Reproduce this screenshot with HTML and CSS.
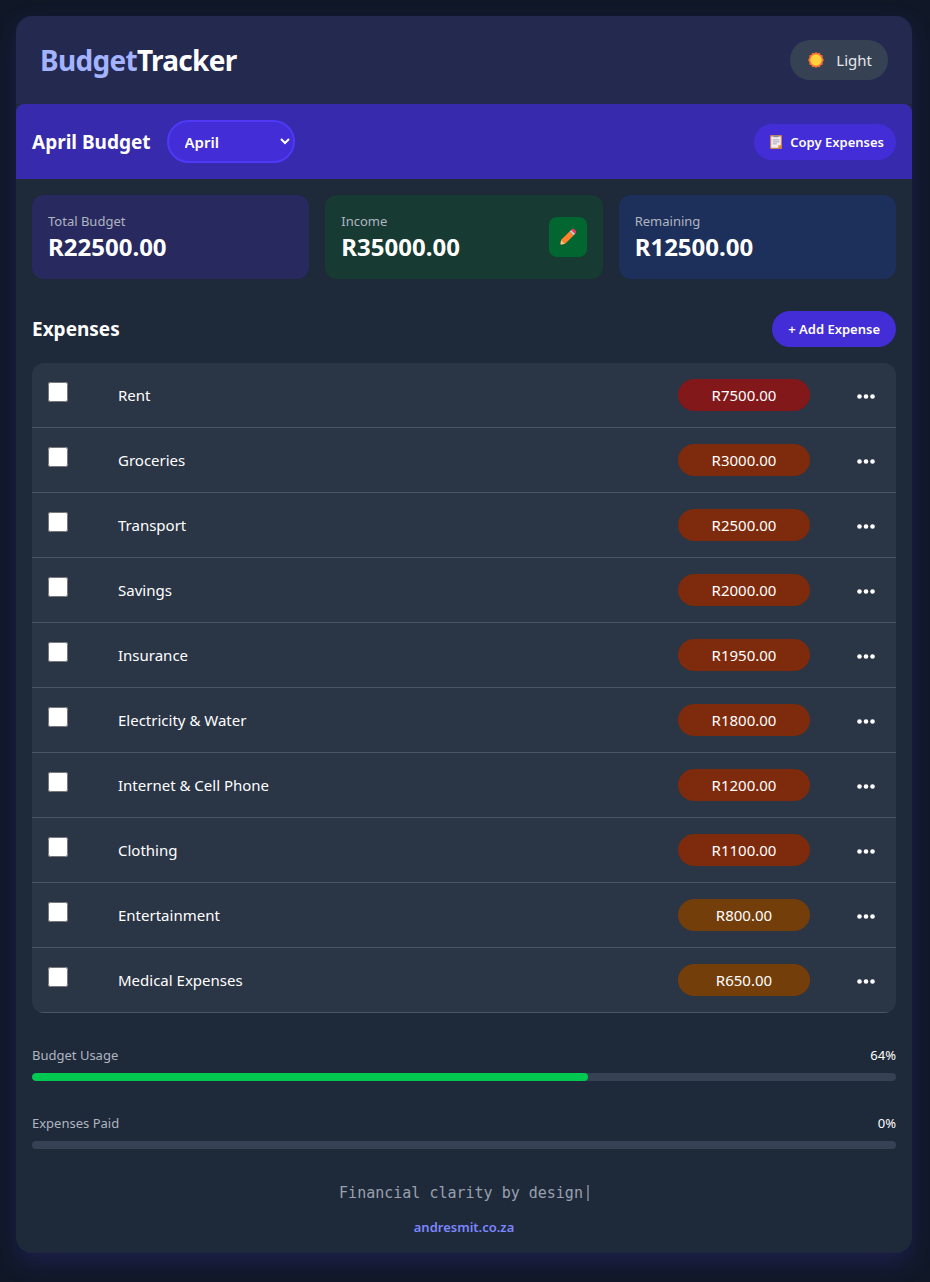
FILE: index.html
```html
<!DOCTYPE html>
<html lang="en">
<head>
<meta charset="utf-8">
<meta name="viewport" content="width=device-width, initial-scale=1">
<title>BudgetTracker</title>
<link rel="stylesheet" href="styles.css">
</head>
<body>
<div class="app">
  <header class="app-header">
    <h1 class="brand"><span class="brand-accent">Budget</span>Tracker</h1>
    <button type="button" class="theme-toggle">
      <svg class="icon-sun" viewBox="0 0 16 16" aria-hidden="true">
        <path fill="#f8702f" d="M8 0l1.6 1.3 2.1-.6.9 2 2.1.8-.1 2.2L16 8l-1.4 2.2.1 2.2-2.1.8-.9 2-2.1-.5L8 16l-1.6-1.3-2.1.5-.9-2-2.1-.8.1-2.2L0 8l1.4-2.3-.1-2.2 2.1-.8.9-2 2.1.6z"/>
        <circle cx="8" cy="8" r="5.7" fill="#ffd23e"/>
      </svg>
      <span>Light</span>
    </button>
  </header>

  <section class="month-bar">
    <div class="month-picker">
      <h2 class="section-title">April Budget</h2>
      <select class="month-select" aria-label="Month">
        <option>January</option><option>February</option><option>March</option>
        <option selected>April</option><option>May</option><option>June</option>
        <option>July</option><option>August</option><option>September</option>
        <option>October</option><option>November</option><option>December</option>
      </select>
    </div>
    <button type="button" class="btn btn-copy">
      <svg class="icon-clipboard" viewBox="0 0 12 14" aria-hidden="true">
        <rect width="12" height="14" y="0" rx="1" fill="#c9834a"/>
        <path fill="#f1eef5" d="M1.2 1.6h9.6v8.2L8 12.8H1.2z"/>
        <path fill="#f5b45c" d="M8 12.8V9.9h2.8z"/>
        <path fill="#8f8a99" d="M3.5.3h5v2h-5z"/>
        <path stroke="#aaa5b8" stroke-width="1" d="M2.7 4.8h6.6M2.7 6.8h6.6M2.7 8.8h4.2"/>
      </svg>
      <span>Copy Expenses</span>
    </button>
  </section>

  <main class="content">
    <section class="stats">
      <div class="stat stat-total">
        <div><p class="stat-label">Total Budget</p><p class="stat-value">R22500.00</p></div>
      </div>
      <div class="stat stat-income">
        <div><p class="stat-label">Income</p><p class="stat-value">R35000.00</p></div>
        <button type="button" class="edit-income" aria-label="Edit income">
          <svg class="icon-pencil" viewBox="0 0 18 18" aria-hidden="true">
            <path fill="#ffc27d" d="M1 17l1.2-5.2 4 4z"/>
            <path fill="#5b4a55" d="M1 17l.4-1.6 1.2 1.2z"/>
            <path fill="#ff822d" d="M2.2 11.8l8.6-8.5 4 3.9-8.6 8.6z"/>
            <path fill="#d3d3da" d="M10.8 3.3l1.4-1.4 4 3.9-1.4 1.4z"/>
            <path fill="#f8315f" d="M12.2 1.9l.8-.8q1-.9 2 0l2 2q.8.9 0 1.8l-.8.9z"/>
          </svg>
        </button>
      </div>
      <div class="stat stat-remaining">
        <div><p class="stat-label">Remaining</p><p class="stat-value">R12500.00</p></div>
      </div>
    </section>

    <section class="expenses">
      <div class="expenses-head">
        <h2 class="section-title">Expenses</h2>
        <button type="button" class="btn">+ Add Expense</button>
      </div>
      <table class="expense-table">
        <colgroup><col class="col-check"><col><col class="col-amount"><col class="col-menu"></colgroup>
        <tbody>
          <tr><td><input type="checkbox" id="e1" class="paid"></td><td><label for="e1">Rent</label></td><td><span class="amount amount-high">R7500.00</span></td><td><button type="button" class="menu" aria-label="Rent options"><svg viewBox="0 0 18 5"><circle cx="2.5" cy="2.5" r="2.3"/><circle cx="9" cy="2.5" r="2.3"/><circle cx="15.5" cy="2.5" r="2.3"/></svg></button></td></tr>
          <tr><td><input type="checkbox" id="e2" class="paid"></td><td><label for="e2">Groceries</label></td><td><span class="amount amount-mid">R3000.00</span></td><td><button type="button" class="menu" aria-label="Groceries options"><svg viewBox="0 0 18 5"><circle cx="2.5" cy="2.5" r="2.3"/><circle cx="9" cy="2.5" r="2.3"/><circle cx="15.5" cy="2.5" r="2.3"/></svg></button></td></tr>
          <tr><td><input type="checkbox" id="e3" class="paid"></td><td><label for="e3">Transport</label></td><td><span class="amount amount-mid">R2500.00</span></td><td><button type="button" class="menu" aria-label="Transport options"><svg viewBox="0 0 18 5"><circle cx="2.5" cy="2.5" r="2.3"/><circle cx="9" cy="2.5" r="2.3"/><circle cx="15.5" cy="2.5" r="2.3"/></svg></button></td></tr>
          <tr><td><input type="checkbox" id="e4" class="paid"></td><td><label for="e4">Savings</label></td><td><span class="amount amount-mid">R2000.00</span></td><td><button type="button" class="menu" aria-label="Savings options"><svg viewBox="0 0 18 5"><circle cx="2.5" cy="2.5" r="2.3"/><circle cx="9" cy="2.5" r="2.3"/><circle cx="15.5" cy="2.5" r="2.3"/></svg></button></td></tr>
          <tr><td><input type="checkbox" id="e5" class="paid"></td><td><label for="e5">Insurance</label></td><td><span class="amount amount-mid">R1950.00</span></td><td><button type="button" class="menu" aria-label="Insurance options"><svg viewBox="0 0 18 5"><circle cx="2.5" cy="2.5" r="2.3"/><circle cx="9" cy="2.5" r="2.3"/><circle cx="15.5" cy="2.5" r="2.3"/></svg></button></td></tr>
          <tr><td><input type="checkbox" id="e6" class="paid"></td><td><label for="e6">Electricity &amp; Water</label></td><td><span class="amount amount-mid">R1800.00</span></td><td><button type="button" class="menu" aria-label="Electricity &amp; Water options"><svg viewBox="0 0 18 5"><circle cx="2.5" cy="2.5" r="2.3"/><circle cx="9" cy="2.5" r="2.3"/><circle cx="15.5" cy="2.5" r="2.3"/></svg></button></td></tr>
          <tr><td><input type="checkbox" id="e7" class="paid"></td><td><label for="e7">Internet &amp; Cell Phone</label></td><td><span class="amount amount-mid">R1200.00</span></td><td><button type="button" class="menu" aria-label="Internet &amp; Cell Phone options"><svg viewBox="0 0 18 5"><circle cx="2.5" cy="2.5" r="2.3"/><circle cx="9" cy="2.5" r="2.3"/><circle cx="15.5" cy="2.5" r="2.3"/></svg></button></td></tr>
          <tr><td><input type="checkbox" id="e8" class="paid"></td><td><label for="e8">Clothing</label></td><td><span class="amount amount-mid">R1100.00</span></td><td><button type="button" class="menu" aria-label="Clothing options"><svg viewBox="0 0 18 5"><circle cx="2.5" cy="2.5" r="2.3"/><circle cx="9" cy="2.5" r="2.3"/><circle cx="15.5" cy="2.5" r="2.3"/></svg></button></td></tr>
          <tr><td><input type="checkbox" id="e9" class="paid"></td><td><label for="e9">Entertainment</label></td><td><span class="amount amount-low">R800.00</span></td><td><button type="button" class="menu" aria-label="Entertainment options"><svg viewBox="0 0 18 5"><circle cx="2.5" cy="2.5" r="2.3"/><circle cx="9" cy="2.5" r="2.3"/><circle cx="15.5" cy="2.5" r="2.3"/></svg></button></td></tr>
          <tr><td><input type="checkbox" id="e10" class="paid"></td><td><label for="e10">Medical Expenses</label></td><td><span class="amount amount-low">R650.00</span></td><td><button type="button" class="menu" aria-label="Medical Expenses options"><svg viewBox="0 0 18 5"><circle cx="2.5" cy="2.5" r="2.3"/><circle cx="9" cy="2.5" r="2.3"/><circle cx="15.5" cy="2.5" r="2.3"/></svg></button></td></tr>
        </tbody>
      </table>
    </section>

    <section class="progress-list">
      <div class="progress">
        <div class="progress-head"><span class="progress-label">Budget Usage</span><span>64%</span></div>
        <div class="track"><div class="fill" style="width: 64.3%"></div></div>
      </div>
      <div class="progress">
        <div class="progress-head"><span class="progress-label">Expenses Paid</span><span>0%</span></div>
        <div class="track"><div class="fill" style="width: 0%"></div></div>
      </div>
    </section>
  </main>

  <footer class="app-footer">
    <p class="tagline">Financial clarity by design</p>
    <a class="site-link" href="#">andresmit.co.za</a>
  </footer>
</div>
</body>
</html>
```
FILE: styles.css
```css
* {
  box-sizing: border-box;
  margin: 0;
}

body {
  padding: 16px 18px 16px 16px;
  background: #101828;
  color: #fff;
  font: 15px/24px "Noto Sans", sans-serif;
}

button,
select {
  border: 0;
  color: inherit;
  font: inherit;
  cursor: pointer;
}

.app {
  max-width: 1024px;
  margin: 0 auto 13px;
  overflow: hidden;
  border-radius: 16px;
  background: #1e2939;
  box-shadow: 0 10px 25px -3px rgba(49, 44, 133, 0.45);
}

.app-header {
  display: flex;
  align-items: center;
  justify-content: space-between;
  padding: 24px;
  background: rgba(49, 44, 133, 0.3);
}

.brand {
  font-size: 28px;
  line-height: 40px;
  letter-spacing: -0.025em;
}

.brand-accent {
  color: #a3b3ff;
}

.theme-toggle {
  display: flex;
  align-items: center;
  gap: 12px;
  padding: 8px 16px;
  border-radius: 20px;
  background: #364153;
  color: #e5e7eb;
}

.icon-sun {
  width: 16px;
  height: 16px;
  margin-left: 2px;
}

.month-bar {
  display: flex;
  align-items: center;
  justify-content: space-between;
  padding: 16px;
  border-radius: 8px 8px 0 0;
  background: #372aac;
}

.month-picker {
  display: flex;
  align-items: center;
  gap: 16px;
}

.section-title {
  font-size: 19px;
  line-height: 28px;
}

.month-select {
  width: 128px;
  height: 43px;
  padding: 8px 12px;
  border: 2px solid #4f39f6;
  border-radius: 22px;
  background: #432dd7;
  font-weight: 600;
}

.btn {
  padding: 8px 16px;
  border-radius: 18px;
  background: #432dd7;
  font-size: 13px;
  font-weight: 600;
  line-height: 20px;
}

.btn-copy {
  display: flex;
  align-items: center;
  gap: 8px;
  padding-right: 12px;
}

.icon-clipboard {
  width: 12px;
  height: 14px;
}

.content {
  padding: 16px 16px 0;
}

.stats {
  display: grid;
  grid-template-columns: repeat(3, 1fr);
  gap: 16px;
}

.stat {
  display: flex;
  align-items: center;
  justify-content: space-between;
  padding: 16px;
  border-radius: 12px;
}

.stat-total {
  background: rgba(49, 44, 133, 0.5);
}

.stat-income {
  background: rgba(13, 84, 43, 0.4);
}

.stat-remaining {
  background: rgba(28, 57, 142, 0.4);
}

.stat-label {
  color: #b0b5c0;
  font-size: 13px;
  line-height: 20px;
}

.stat-value {
  font-size: 24px;
  font-weight: 700;
  line-height: 32px;
}

.edit-income {
  display: flex;
  align-items: center;
  justify-content: center;
  width: 38px;
  height: 40px;
  padding: 0;
  border-radius: 8px;
  background: #016630;
}

.icon-pencil {
  width: 18px;
  height: 18px;
}

.expenses {
  margin-top: 32px;
}

.expenses-head {
  display: flex;
  align-items: center;
  justify-content: space-between;
  margin-bottom: 16px;
}

.expense-table {
  width: 100%;
  overflow: hidden;
  border-spacing: 0;
  border-radius: 12px;
  background: rgba(54, 65, 83, 0.5);
  table-layout: fixed;
}

.expense-table td {
  height: 65px;
  padding: 0 16px;
  border-bottom: 1px solid #4a5565;
}

.col-check,
.col-menu {
  width: 70px;
}

.col-amount {
  width: 164px;
}

.paid {
  display: block;
  width: 20px;
  height: 20px;
  margin-bottom: 7px;
}

.amount {
  display: block;
  padding: 4px 12px;
  border-radius: 16px;
  text-align: center;
}

.amount-high {
  background: #82181a;
}

.amount-mid {
  background: #7e2a0c;
}

.amount-low {
  background: #733e0a;
}

.menu {
  display: flex;
  align-items: center;
  justify-content: center;
  width: 100%;
  margin-left: 5px;
  padding: 10px 0 8px;
  background: none;
}

.menu svg {
  width: 18px;
  fill: #fff;
}

.progress-list {
  display: grid;
  gap: 32px;
  margin-top: 32px;
}

.progress-head {
  display: flex;
  justify-content: space-between;
  margin-bottom: 8px;
  font-size: 13px;
  line-height: 20px;
}

.progress-label {
  color: #b0b5c0;
}

.track {
  overflow: hidden;
  border-radius: 4px;
  background: #364153;
}

.fill {
  height: 8px;
  border-radius: 4px;
  background: #00c951;
}

.app-footer {
  display: flex;
  flex-direction: column;
  align-items: center;
  gap: 16px;
  padding: 36px 16px 16px;
}

.tagline {
  padding-right: 4px;
  border-right: 2px solid #6a7282;
  color: #99a1af;
  font: 15px/16px "DejaVu Sans Mono", monospace;
}

.site-link {
  color: #7c86ff;
  font-size: 13px;
  font-weight: 600;
  line-height: 20px;
  text-decoration: none;
}
```
